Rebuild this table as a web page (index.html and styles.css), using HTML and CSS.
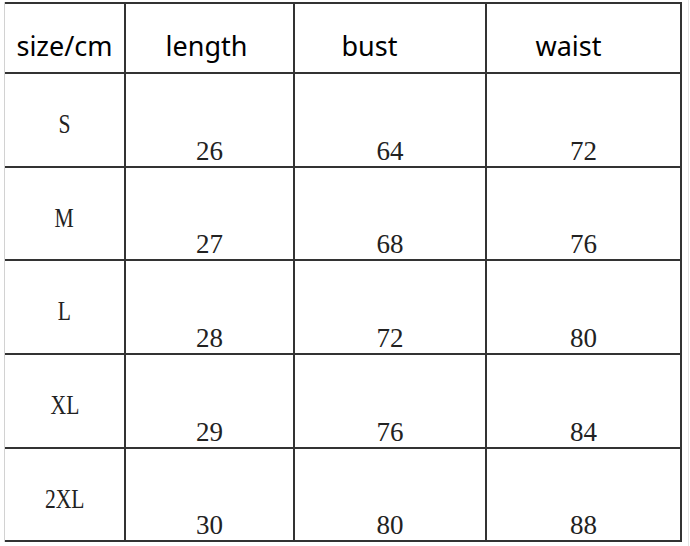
FILE: index.html
```html
<!DOCTYPE html>
<html lang="en">
<head>
<meta charset="utf-8">
<title>Size chart</title>
<link rel="stylesheet" href="styles.css">
</head>
<body>
<div class="page">
  <div class="sheet">
    <div class="cell head h-size">size/cm</div>
    <div class="cell head h-length">length</div>
    <div class="cell head h-bust">bust</div>
    <div class="cell head h-waist">waist</div>

    <div class="cell label"><span class="lbl">S</span></div>
    <div class="cell num">26</div>
    <div class="cell num">64</div>
    <div class="cell num">72</div>

    <div class="cell label"><span class="lbl">M</span></div>
    <div class="cell num">27</div>
    <div class="cell num">68</div>
    <div class="cell num">76</div>

    <div class="cell label"><span class="lbl">L</span></div>
    <div class="cell num">28</div>
    <div class="cell num">72</div>
    <div class="cell num">80</div>

    <div class="cell label"><span class="lbl">XL</span></div>
    <div class="cell num">29</div>
    <div class="cell num">76</div>
    <div class="cell num">84</div>

    <div class="cell label"><span class="lbl">2XL</span></div>
    <div class="cell num">30</div>
    <div class="cell num">80</div>
    <div class="cell num">88</div>
  </div>
  <div class="edge"></div>
</div>
</body>
</html>
```

FILE: styles.css
```css
html, body {
  margin: 0;
  padding: 0;
  background: #ffffff;
}

.page {
  display: flex;
  width: 690px;
  height: 546px;
  overflow: hidden;
}

.sheet {
  margin: 2px 0 0 4px;
  display: grid;
  grid-template-columns: 119px 167px 190px 193px;
  grid-template-rows: 68px 92px 91px 92px 92px 91px;
  gap: 2px;
  padding: 2px 2px 2px 0;
  background: #333333;
  border-left: 1px solid #d2d2d2;
  align-self: flex-start;
}

.edge {
  margin-left: 6px;
  width: 1px;
  background: #e6e6e6;
}

.cell {
  background: #ffffff;
  display: flex;
  justify-content: center;
  box-sizing: border-box;
}

.head {
  font-family: "Noto Sans", "Open Sans", sans-serif;
  font-size: 27px;
  line-height: 36px;
  color: #000000;
  padding-top: 24px;
  align-items: flex-start;
}

.h-length { padding-right: 6px; }
.h-bust { padding-right: 41px; }
.h-waist { padding-right: 30px; }

.label {
  font-family: "Liberation Serif", "Times New Roman", serif;
  font-size: 27px;
  line-height: 30px;
  color: #222222;
  align-items: flex-start;
  padding-top: 35px;
}

.lbl {
  display: inline-block;
  transform: scaleX(0.8);
}

.num {
  font-family: "Liberation Serif", "Times New Roman", serif;
  font-size: 27px;
  line-height: 30px;
  color: #222222;
  align-items: flex-end;
  padding-bottom: 0;
}
```
